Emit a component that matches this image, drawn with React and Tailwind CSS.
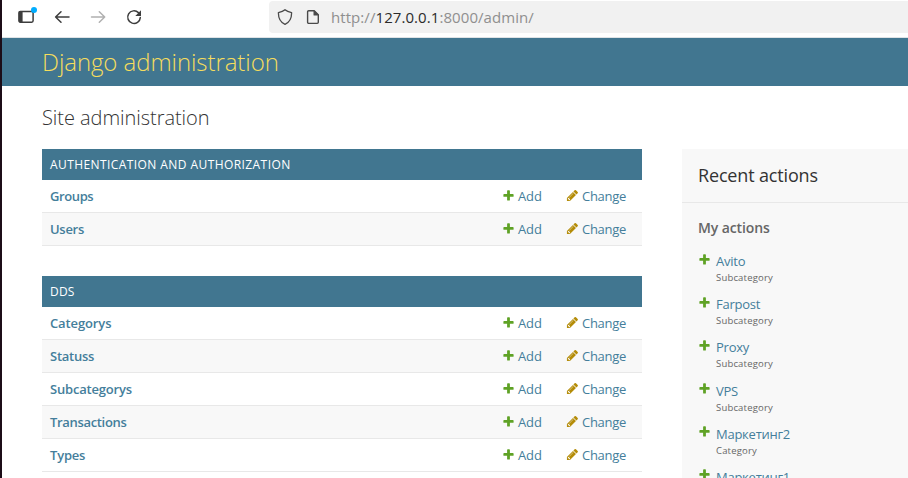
import React from "react";

function PlusIcon({ className }) {
  return (
    <svg viewBox="0 0 1792 1792" width="13" height="13" fill="#5fa225" className={className}>
      <path d="M1600 796v192q0 40-28 68t-68 28h-416v416q0 40-28 68t-68 28h-192q-40 0-68-28t-28-68v-416h-416q-40 0-68-28t-28-68v-192q0-40 28-68t68-28h416v-416q0-40 28-68t68-28h192q40 0 68 28t28 68v416h416q40 0 68 28t28 68z" />
    </svg>
  );
}

function PencilIcon({ className }) {
  return (
    <svg viewBox="0 0 1792 1792" width="13" height="13" fill="#b48c08" className={className}>
      <path d="M491 1536l91-91-235-235-91 91v107h128v128h107zm523-928q0-22-22-22-10 0-17 7l-542 542q-7 7-7 17 0 22 22 22 10 0 17-7l542-542q7-7 7-17zm-54-192l416 416-832 832h-416v-416zm683 96q0 53-37 90l-166 166-416-416 166-165q36-38 90-38 53 0 91 38l235 234q37 39 37 91z" />
    </svg>
  );
}

function Toolbar() {
  return (
    <div className="flex h-[38px] shrink-0 items-start border-b border-[#dfe3e6] bg-white text-[#3d3d3d]">
      <svg className="ml-4 mt-[5px] shrink-0" width="20" height="20" viewBox="0 0 20 20" fill="none">
        <rect x="0.9" y="6.4" width="14.2" height="10.8" rx="1.4" stroke="currentColor" strokeWidth="1.5" />
        <path d="M1 6.5h3.6v10.6H1z" fill="currentColor" />
        <circle cx="16" cy="5" r="3" fill="#00adff" />
      </svg>
      <svg className="ml-4 mt-[9px] shrink-0" width="16" height="16" viewBox="0 0 16 16" fill="none" stroke="currentColor" strokeWidth="1.5" strokeLinecap="round" strokeLinejoin="round">
        <path d="M15 8H1.6M7 2.7L1.6 8 7 13.3" />
      </svg>
      <svg className="ml-5 mt-[9px] shrink-0 text-[#b0b0b0]" width="16" height="16" viewBox="0 0 16 16" fill="none" stroke="currentColor" strokeWidth="1.5" strokeLinecap="round" strokeLinejoin="round">
        <path d="M1.5 8h13.2M9.3 2.7L14.7 8l-5.4 5.3" />
      </svg>
      <svg className="ml-5 mt-[9px] shrink-0" width="16" height="16" viewBox="0 0 16 16" fill="none">
        <path d="M12.4 3.6A6.3 6.3 0 1 0 14.3 8.6" stroke="currentColor" strokeWidth="1.5" strokeLinecap="round" />
        <path d="M15 1.2v5.2a.6.6 0 0 1-.6.6H9.3z" fill="currentColor" />
      </svg>
      <div className="ml-[127px] mt-px flex h-8 grow items-center rounded-l bg-[#f1f1f1]">
        <svg className="ml-2 shrink-0" width="16" height="16" viewBox="0 0 16 16" fill="none" stroke="#4a4a4a" strokeWidth="1.3" strokeLinejoin="round">
          <path d="M8 .8c1.4 1.3 3.8 2.3 6.6 2.8.1 5-1.7 9.6-6.6 11.7C3.1 13.2 1.3 8.6 1.4 3.6 4.2 3.1 6.6 2.1 8 .8z" />
        </svg>
        <svg className="ml-3 shrink-0" width="16" height="16" viewBox="0 0 16 16" fill="none" stroke="#4a4a4a" strokeWidth="1.4" strokeLinejoin="round">
          <path d="M3.7 1.7h5.5l4.1 4.1v7.5a1.1 1.1 0 0 1-1.1 1.1H3.7a1.1 1.1 0 0 1-1.1-1.1V2.8a1.1 1.1 0 0 1 1.1-1.1z" />
          <path d="M9.2 2.2v3.7h3.7z" fill="#4a4a4a" />
        </svg>
        <span className="ml-[10px] whitespace-nowrap text-[15px] leading-[33px] tracking-[0.07px] text-[#8f8f8f]">
          http://<span className="text-[#2b2b2b]">127.0.0.1</span>:8000/admin/
        </span>
      </div>
    </div>
  );
}

function Module({ title, titleClass, rows }) {
  return (
    <section className="mb-[30px] w-[600px]">
      <h2 className={`h-[31px] bg-[#417690] px-2 text-[12px] leading-[31px] text-white ${titleClass}`}>{title}</h2>
      {rows.map(([name, spacing]) => (
        <div key={name} className="flex h-[33px] items-center border-b border-[#e8e8e8] px-2 text-[13px] leading-8 text-[#447e9b] odd:bg-[#f8f8f8]">
          <span className={`w-[452px] font-semibold ${spacing}`}>{name}</span>
          <PlusIcon className="-mt-px" />
          <span className="ml-[3px] w-12 tracking-[-0.1px]">Add</span>
          <PencilIcon className="-mt-px" />
          <span className="ml-[3px] tracking-[-0.27px]">Change</span>
        </div>
      ))}
    </section>
  );
}

const AUTH = [
  ["Groups", "tracking-[-0.4px]"],
  ["Users", "tracking-[-0.3px]"],
];

const DDS = [
  ["Categorys", "tracking-[-0.12px]"],
  ["Statuss", "tracking-[-0.25px]"],
  ["Subcategorys", "tracking-[-0.2px]"],
  ["Transactions", "tracking-[-0.33px]"],
  ["Types", "tracking-[-0.2px]"],
];

const ACTIONS = [
  ["Avito", "Subcategory"],
  ["Farpost", "Subcategory"],
  ["Proxy", "Subcategory"],
  ["VPS", "Subcategory"],
  ["Маркетинг2", "Category"],
  ["Маркетинг1", "Category"],
];

function RecentActions() {
  return (
    <aside className="ml-10 grow bg-[#f8f8f8]">
      <h2 className="h-[54px] border-b border-[#e8e8e8] px-4 text-[18px] leading-[53px] tracking-[-0.16px] text-[#333]">Recent actions</h2>
      <h3 className="mt-[15px] px-4 text-[14px] font-semibold leading-5 tracking-[-0.1px] text-[#666]">My actions</h3>
      <ul className="mt-[13px] px-4">
        {ACTIONS.map(([name, kind]) => (
          <li key={name} className="flex h-[43.2px]">
            <PlusIcon className="mt-[1.5px] shrink-0" />
            <div className="ml-[5px]">
              <div className="text-[13px] leading-[20px] tracking-[-0.25px] text-[#447e9b]">{name}</div>
              <div className="text-[9.5px] leading-[13px] tracking-[0.18px] text-[#666]">{kind}</div>
            </div>
          </li>
        ))}
      </ul>
    </aside>
  );
}

export default function App() {
  return (
    <div className="flex h-[478px] w-[908px] flex-col overflow-hidden border-l-2 border-[#1c0d18] bg-white font-['Open_Sans','Noto_Sans',sans-serif]">
      <Toolbar />
      <header className="h-12 shrink-0 bg-[#417690] pl-10 text-[24px] font-light leading-[47px] tracking-[-0.07px] text-[#f5dd5d]">Django administration</header>
      <h1 className="h-[63px] shrink-0 pl-10 pt-[19px] text-[20px] font-light leading-[25px] tracking-[-0.05px] text-[#333]">Site administration</h1>
      <main className="flex min-h-0 grow pl-10">
        <div className="w-[600px] shrink-0">
          <Module title="AUTHENTICATION AND AUTHORIZATION" titleClass="tracking-[0.42px]" rows={AUTH} />
          <Module title="DDS" titleClass="tracking-[0.2px]" rows={DDS} />
        </div>
        <RecentActions />
      </main>
    </div>
  );
}
